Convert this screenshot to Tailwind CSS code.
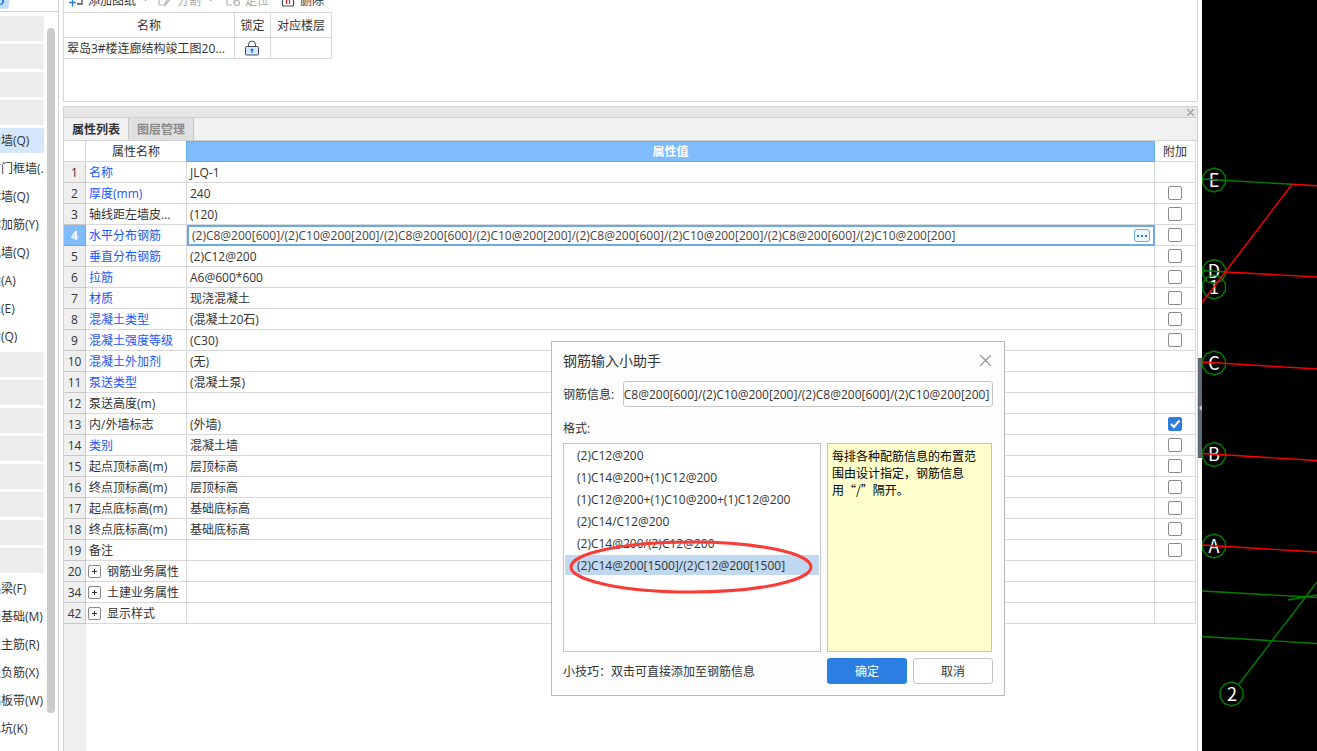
<!DOCTYPE html>
<html lang="zh-CN">
<head>
<meta charset="utf-8">
<title>钢筋输入小助手</title>
<script src="https://cdn.jsdelivr.net/npm/@tailwindcss/browser@4"></script>
</head>
<body class="relative flex h-screen overflow-hidden bg-white font-['Open_Sans','Noto_Sans_CJK_SC',sans-serif] text-[12px] leading-[17px] text-[#333]">

<!-- Component tree -->
<aside class="flex w-[59px] shrink-0 flex-col overflow-hidden border-r border-[#d4d4d4]">
  <div class="h-3 shrink-0 border-b border-[#d4d4d4]">
    <div class="flex h-[9px] w-[9px] items-start rounded-br-sm bg-[#c5dcf7]"><div class="h-[5px] w-1 rounded-br-sm border-r-2 border-b border-[#2b7de0]"></div></div>
  </div>
  <div class="flex min-h-0 flex-1 pt-1">
    <nav id="tree" class="flex w-11 flex-col gap-[3px] overflow-hidden"></nav>
    <div class="mt-3 ml-[3px] h-[685px] w-2 rounded-full bg-[#cbcbcb]"></div>
  </div>
</aside>

<main class="ml-1 flex min-w-0 flex-1 flex-col">
  <!-- Drawing list -->
  <section class="h-[102px] shrink-0 overflow-hidden border-x border-b border-[#d8d8d8]">
    <div class="-mt-3 flex h-6 items-center pl-1">
      <button class="flex items-center gap-1"><svg class="size-4" viewBox="0 0 16 16" fill="none"><path d="M8 1h6v11H9" stroke="#444b60" stroke-width="1.300"/><path d="M1 10.500h7M4.500 7v7.500" stroke="#2b7de0" stroke-width="1.300"/></svg>添加图纸</button>
      <span class="ml-2 w-[13px] text-[#999]">·</span>
      <button class="flex items-center gap-1 text-[#a8a8a8]"><svg class="size-4" viewBox="0 0 16 16" fill="none" stroke="#b5b5b5" stroke-width="1.200"><path d="M7 2H2v11h4M7 14l1-3 6-7 1 1-6 7z"/></svg>分割</button>
      <span class="ml-2 w-4 text-[#999]">·</span>
      <button class="flex items-center gap-1 text-[#a8a8a8]"><svg class="size-4" viewBox="0 0 16 16" fill="none" stroke="#b5b5b5" stroke-width="1.200"><path d="M9 2H2v11h5"/><circle cx="12" cy="11" r="2.500"/><path d="M9 7v5"/></svg>定位</button>
      <button class="ml-[11px] flex items-center gap-1"><svg class="size-4" viewBox="0 0 16 16" fill="none"><path d="M2.500 3v10q0 1 1 1h9q1 0 1-1V3" stroke="#444b60" stroke-width="1.200"/><path d="M6.500 4v8M9.500 4v8" stroke="#e02020" stroke-width="1.200"/></svg>删除</button>
    </div>
    <table class="w-[268px] table-fixed border-separate border-spacing-0 border-t border-[#d8d8d8]">
      <thead><tr>
        <th class="h-[25px] w-[171px] border-r border-b border-[#d8d8d8] p-0 font-normal">名称</th>
        <th class="w-9 border-r border-b border-[#d8d8d8] p-0 font-normal">锁定</th>
        <th class="border-r border-b border-[#d8d8d8] p-0 font-normal">对应楼层</th>
      </tr></thead>
      <tbody><tr>
        <td class="h-[21px] border-r border-b border-[#d8d8d8] p-0 pl-[3px] whitespace-nowrap">翠岛3#楼连廊结构竣工图20...</td>
        <td class="border-r border-b border-[#d8d8d8] p-0 pr-[2px]"><svg class="mx-auto size-4" viewBox="0 0 16 16" fill="none"><path d="M4.500 7V4.500a3.500 3.500 0 0 1 7 0V7" stroke="#444b60"/><rect x="1.500" y="6.500" width="13" height="8.500" rx="1" fill="#d5e8fd" stroke="#444b60"/><circle cx="8" cy="10" r="1.500" fill="#1f7cf0"/><path d="M8 10v3" stroke="#1f7cf0" stroke-width="1.200"/></svg></td>
        <td class="border-r border-b border-[#d8d8d8] p-0"></td>
      </tr></tbody>
    </table>
  </section>

  <!-- Property panel -->
  <section class="mt-1 flex min-h-0 flex-1 flex-col border-x border-t border-[#d0d0d0]">
    <div class="flex h-[11px] shrink-0 items-center justify-end border-b border-[#d0d0d0] bg-[#e6e6e6] pr-[3px]">
      <button aria-label="关闭面板"><svg class="size-[7px]" viewBox="0 0 7 7" stroke="#999" stroke-width="1.200"><path d="M0 0l7 7M7 0l-7 7"/></svg></button>
    </div>
    <div class="flex h-[23px] shrink-0 border-b border-[#d0d0d0] bg-[#f1f1f1] font-bold">
      <button class="w-[65px] border-r border-[#c8c8c8] bg-[#f1f1f1]">属性列表</button>
      <button class="w-[65px] border-r border-[#c8c8c8] bg-[#e0e0e0] text-[#8a8a8a]">图层管理</button>
    </div>
    <div class="flex min-h-0 flex-1 flex-col pr-px">
      <table class="w-full table-fixed border-separate border-spacing-0">
        <thead><tr>
          <th class="h-[21px] w-[22px] border-r border-b border-[#d8d8d8] p-0"></th>
          <th class="w-[101px] border-r border-b border-r-[#6aa9ea] border-b-[#d8d8d8] p-0 font-normal">属性名称</th>
          <th class="border border-l-0 border-[#6aa9ea] bg-[#80bbfb] p-0 text-white">属性值</th>
          <th class="w-[41px] border-r border-b border-[#d8d8d8] p-0 font-normal">附加</th>
        </tr></thead>
        <tbody id="props"></tbody>
      </table>
      <div class="w-[22px] flex-1 bg-[#efefef]"></div>
    </div>
  </section>
</main>

<!-- Splitter -->
<div class="w-1 shrink-0 bg-white pt-[358px]">
  <button aria-label="折叠" class="flex h-[100px] w-1 items-center justify-end bg-[#5f6977]"><svg class="h-[6px] w-[3px]" viewBox="0 0 3 6"><path d="M3 0v6L0 3z" fill="#c3c8cf"/></svg></button>
</div>

<!-- Drawing canvas with axis grid -->
<div class="w-[115px] shrink-0 overflow-hidden bg-black">
  <svg class="h-[751px] w-[115px]" viewBox="0 0 115 751" fill="none" stroke-width="1.400">
    <defs><polygon id="b" points="0,-12 7,-9.700 11.400,-3.700 11.400,3.700 7,9.700 0,12 -7,9.700 -11.400,3.700 -11.400,-3.700 -7,-9.700"/></defs>
    <g fill="#fff" text-anchor="middle" class="font-['Noto_Sans_CJK_SC',sans-serif] text-[18px]">
      <text x="12" y="187">E</text><text x="12" y="278">D</text><text x="12" y="294">1</text><text x="12" y="370">C</text><text x="12" y="461">B</text><text x="12" y="553">A</text><text x="30" y="701">2</text>
    </g>
    <g stroke="#008000">
      <path d="M0 179L90 184.300M0 270.500L24 272M0 591L115 597.500M0 636.500L115 643.500M37 684L115 582M86 600L115 595"/>
      <use href="#b" x="12" y="180"/><use href="#b" x="12" y="271.500"/><use href="#b" x="12" y="287"/><use href="#b" x="12" y="363"/><use href="#b" x="12" y="454.500"/><use href="#b" x="12" y="546"/><use href="#b" x="29.500" y="694"/>
    </g>
    <path stroke="#f00" d="M115 185.800L90 184.300L0 302.500M24 272L115 277M0 362L115 369M0 453.500L115 460.500M0 545L115 552"/>
  </svg>
</div>

<!-- Rebar input helper -->
<div role="dialog" aria-labelledby="dlg-title" class="absolute top-[341px] left-[551px] flex w-[454px] flex-col border border-[#b9b9b9] bg-[#fdfdfd] px-[11px] pb-[11px]">
  <div class="mb-[2px] flex h-[37px] items-center justify-between">
    <h2 id="dlg-title" class="text-[14px]">钢筋输入小助手</h2>
    <button aria-label="关闭" class="pr-[2px]"><svg class="size-[11px]" viewBox="0 0 11 11" stroke="#888" stroke-width="1.200"><path d="M0 0l11 11M11 0L0 11"/></svg></button>
  </div>
  <div class="flex items-center">
    <label for="info" class="w-[60px]">钢筋信息:</label>
    <input id="info" type="text" class="h-[26px] min-w-0 flex-1 rounded-[3px] border border-[#c4c4c4] bg-white pr-[3px] outline-none">
  </div>
  <div class="flex h-9 items-center pt-[6px]">格式:</div>
  <div class="flex h-[209px] gap-[6px]">
    <ul class="flex w-[258px] flex-col gap-[2px] border border-[#c4c4c4] bg-white p-px leading-[20px]">
      <li class="h-5 pt-px pl-3">(2)C12@200</li>
      <li class="h-5 pt-px pl-3">(1)C14@200+(1)C12@200</li>
      <li class="h-5 pt-px pl-3">(1)C12@200+(1)C10@200+(1)C12@200</li>
      <li class="h-5 pt-px pl-3">(2)C14/C12@200</li>
      <li class="h-5 pt-px pl-3">(2)C14@200/(2)C12@200</li>
      <li class="h-5 bg-[#c0d8f0] pt-px pl-3">(2)C14@200[1500]/(2)C12@200[1500]</li>
    </ul>
    <p class="w-[165px] border border-[#c4c4c4] bg-[#ffffce] px-1 py-[3px] font-['Noto_Sans_CJK_SC',sans-serif] text-black">每排各种配筋信息的布置范<br>围由设计指定，钢筋信息<br>用“/”隔开。</p>
  </div>
  <div class="mt-[6px] flex items-center gap-[6px]">
    <span class="w-[258px]">小技巧：双击可直接添加至钢筋信息</span>
    <button class="h-[26px] w-20 rounded-[3px] bg-[#2b7fe2] text-white">确定</button>
    <button class="h-[26px] w-20 rounded-[3px] border border-[#c4c4c4] bg-white">取消</button>
  </div>
  <svg class="pointer-events-none absolute top-[198px] left-[16px] h-[54px] w-[246px]" viewBox="0 0 246 54" fill="none"><ellipse cx="123" cy="27" rx="120" ry="25" stroke="#fa3c38" stroke-width="3"/></svg>
</div>

<script>
const rebar = Array(4).fill('(2)C8@200[600]/(2)C10@200[200]').join('/');

// Empty entries are group headers
const tree = ['', '', '', '', '剪力墙(Q)', '人防门框墙(...', '砌体墙(Q)', '砌体加筋(Y)', '虚拟墙(Q)', '暗梁(A)', '墙垛(E)', '幕墙(Q)', '', '', '', '', '', '', '', '', '基础梁(F)', '筏板基础(M)', '筏板主筋(R)', '筏板负筋(X)', '基础板带(W)', '集水坑(K)'];
document.getElementById('tree').innerHTML = tree.map((t, i) => t
  ? `<a href="#" class="block h-[25px] shrink-0 overflow-hidden leading-[25px] whitespace-nowrap ${i === 4 ? 'bg-[#d4e7fd]' : ''}"><span class="-ml-[23px]">${t}</span></a>`
  : '<div class="h-[25px] shrink-0 bg-[#ececec]"></div>').join('');

// number, name, value, name style (0 plain, 1 blue, 2 expandable), attach state (0 none, 1 off, 2 on)
const rows = [
  [1, '名称', 'JLQ-1', 1, 0], [2, '厚度(mm)', '240', 1, 1], [3, '轴线距左墙皮...', '(120)', 0, 1],
  [4, '水平分布钢筋', rebar, 1, 1], [5, '垂直分布钢筋', '(2)C12@200', 1, 1], [6, '拉筋', 'A6@600*600', 1, 1],
  [7, '材质', '现浇混凝土', 1, 1], [8, '混凝土类型', '(混凝土20石)', 1, 1], [9, '混凝土强度等级', '(C30)', 1, 1],
  [10, '混凝土外加剂', '(无)', 1, 0], [11, '泵送类型', '(混凝土泵)', 1, 0], [12, '泵送高度(m)', '', 0, 0],
  [13, '内/外墙标志', '(外墙)', 0, 2], [14, '类别', '混凝土墙', 1, 1], [15, '起点顶标高(m)', '层顶标高', 0, 1],
  [16, '终点顶标高(m)', '层顶标高', 0, 1], [17, '起点底标高(m)', '基础底标高', 0, 1], [18, '终点底标高(m)', '基础底标高', 0, 1],
  [19, '备注', '', 0, 1], [20, '钢筋业务属性', '', 2, 0], [34, '土建业务属性', '', 2, 0], [42, '显示样式', '', 2, 0]
];
document.getElementById('props').innerHTML = rows.map(([n, name, value, kind, attach]) => {
  const active = n === 4;
  const label = kind === 2
    ? `<span class="flex items-center gap-[6px]"><button aria-label="展开" class="size-[13px] rounded-[2px] border border-[#888]"><svg class="size-[11px]" viewBox="0 0 11 11" stroke="#333"><path d="M3 5.500h5M5.500 3v5"/></svg></button>${name}</span>` : name;
  const cell = active
    ? `<div class="flex h-[21px] items-center border-2 border-[#6aa9ea] pr-[3px] pl-[3px]"><input aria-label="${name}" value="${value}" class="h-[17px] min-w-0 flex-1 text-[#444] outline-none"><button aria-label="更多" class="flex h-[13px] w-4 items-center justify-center gap-[2px] rounded-[3px] border border-[#6aa9ea] bg-[#eef5fd]"><i class="size-[2px] bg-[#2b7de0]"></i><i class="size-[2px] bg-[#2b7de0]"></i><i class="size-[2px] bg-[#2b7de0]"></i></button></div>` : value;
  const box = attach
    ? `<label class="mx-auto grid size-[14px]"><input type="checkbox" aria-label="附加 ${name}" ${attach === 2 ? 'checked' : ''} class="col-start-1 row-start-1 size-[14px] appearance-none rounded-[2px] border border-[#8a8a8a] bg-white checked:border-[#2b7de0] checked:bg-[#2b7de0]">${attach === 2 ? '<svg class="pointer-events-none col-start-1 row-start-1 size-[14px]" viewBox="0 0 14 14" fill="none" stroke="#fff" stroke-width="2"><path d="M3 7l3 3 5.500-6.500"/></svg>' : ''}</label>` : '';
  return `<tr>
    <td class="h-[21px] border-r border-b p-0 text-center ${active ? 'border-[#6aa9ea] bg-[#80bbfb] font-bold text-white' : 'border-[#c8c8c8] bg-[#efefef]'}">${n}</td>
    <td class="border-r border-b border-[#d8d8d8] p-0 whitespace-nowrap ${kind === 2 ? 'pl-[2px]' : 'pl-[3px]'} ${kind === 1 ? 'text-[#1a55ff]' : ''}">${label}</td>
    <td class="${active ? 'p-0' : 'border-r border-b border-[#d8d8d8] p-0 pl-[3px]'}">${cell}</td>
    <td class="border-r border-b border-[#d8d8d8] p-0">${box}</td></tr>`;
}).join('');

const info = document.getElementById('info');
info.value = rebar;
info.scrollLeft = info.scrollWidth;
</script>
</body>
</html>
